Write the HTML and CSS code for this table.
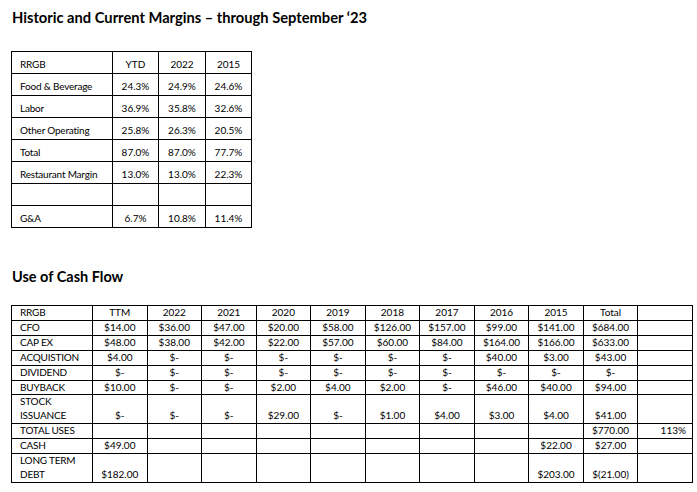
FILE: index.html
```html
<!DOCTYPE html>
<html>
<head>
<meta charset="utf-8">
<link rel="stylesheet" href="styles.css">
</head>
<body>
<h1 class="title">Historic and Current Margins – through September ‘23</h1>
<table class="margins">
  <colgroup><col class="m-label"><col class="m-ytd"><col class="m-y1"><col class="m-y2"></colgroup>
  <tr><td class="lbl">RRGB</td><td>YTD</td><td>2022</td><td>2015</td></tr>
  <tr><td class="lbl">Food &amp; Beverage</td><td>24.3%</td><td>24.9%</td><td>24.6%</td></tr>
  <tr><td class="lbl">Labor</td><td>36.9%</td><td>35.8%</td><td>32.6%</td></tr>
  <tr><td class="lbl">Other Operating</td><td>25.8%</td><td>26.3%</td><td>20.5%</td></tr>
  <tr><td class="lbl">Total</td><td>87.0%</td><td>87.0%</td><td>77.7%</td></tr>
  <tr><td class="lbl">Restaurant Margin</td><td>13.0%</td><td>13.0%</td><td>22.3%</td></tr>
  <tr><td class="lbl"></td><td></td><td></td><td></td></tr>
  <tr><td class="lbl">G&amp;A</td><td>6.7%</td><td>10.8%</td><td>11.4%</td></tr>
</table>

<h2 class="subtitle">Use of Cash Flow</h2>
<table class="cash">
  <colgroup><col class="c-label"><col span="11"></colgroup>
  <tr><td class="lbl">RRGB</td><td>TTM</td><td>2022</td><td>2021</td><td>2020</td><td>2019</td><td>2018</td><td>2017</td><td>2016</td><td>2015</td><td>Total</td><td></td></tr>
  <tr><td class="lbl">CFO</td><td>$14.00</td><td>$36.00</td><td>$47.00</td><td>$20.00</td><td>$58.00</td><td>$126.00</td><td>$157.00</td><td>$99.00</td><td>$141.00</td><td>$684.00</td><td></td></tr>
  <tr><td class="lbl">CAP EX</td><td>$48.00</td><td>$38.00</td><td>$42.00</td><td>$22.00</td><td>$57.00</td><td>$60.00</td><td>$84.00</td><td>$164.00</td><td>$166.00</td><td>$633.00</td><td></td></tr>
  <tr><td class="lbl">ACQUISTION</td><td>$4.00</td><td>$-</td><td>$-</td><td>$-</td><td>$-</td><td>$-</td><td>$-</td><td>$40.00</td><td>$3.00</td><td>$43.00</td><td></td></tr>
  <tr><td class="lbl">DIVIDEND</td><td>$-</td><td>$-</td><td>$-</td><td>$-</td><td>$-</td><td>$-</td><td>$-</td><td>$-</td><td>$-</td><td>$-</td><td></td></tr>
  <tr><td class="lbl">BUYBACK</td><td>$10.00</td><td>$-</td><td>$-</td><td>$2.00</td><td>$4.00</td><td>$2.00</td><td>$-</td><td>$46.00</td><td>$40.00</td><td>$94.00</td><td></td></tr>
  <tr><td class="lbl">STOCK<br>ISSUANCE</td><td>$-</td><td>$-</td><td>$-</td><td>$29.00</td><td>$-</td><td>$1.00</td><td>$4.00</td><td>$3.00</td><td>$4.00</td><td>$41.00</td><td></td></tr>
  <tr><td class="lbl">TOTAL USES</td><td></td><td></td><td></td><td></td><td></td><td></td><td></td><td></td><td></td><td>$770.00</td><td class="pct">113%</td></tr>
  <tr><td class="lbl">CASH</td><td>$49.00</td><td></td><td></td><td></td><td></td><td></td><td></td><td></td><td>$22.00</td><td>$27.00</td><td></td></tr>
  <tr><td class="lbl">LONG TERM<br>DEBT</td><td>$182.00</td><td></td><td></td><td></td><td></td><td></td><td></td><td></td><td>$203.00</td><td>$(21.00)</td><td></td></tr>
</table>
</body>
</html>
```

FILE: styles.css
```css
html, body {
  margin: 0;
  padding: 0;
  background: #ffffff;
}
body {
  font-family: Lato, "Open Sans", "Liberation Sans", sans-serif;
  color: #000000;
}
.title {
  margin: 0;
  padding: 8px 0 0 12px;
  font-size: 14.7px;
  line-height: 19px;
  font-weight: 700;
}
.subtitle {
  margin: 39px 0 0 0;
  padding: 0 0 0 12px;
  font-size: 14.5px;
  line-height: 19px;
  font-weight: 700;
}
table {
  border-collapse: collapse;
  table-layout: fixed;
  font-size: 10px;
}
td {
  border: 1px solid #000;
  padding: 0;
  text-align: center;
  white-space: nowrap;
}
td.lbl {
  text-align: left;
  padding-left: 8px;
  letter-spacing: -0.2px;
}
.margins {
  width: 241px;
  margin: 24px 0 0 11px;
}
.m-label { width: 101px; }
.m-ytd { width: 46px; }
.m-y1 { width: 47px; }
.m-y2 { width: 46px; }
.margins td {
  height: 22px;
  vertical-align: bottom;
  padding-bottom: 3px;
  box-sizing: border-box;
  line-height: 12px;
}
.cash {
  width: 682px;
  margin: 19px 0 0 11px;
}
.c-label { width: 81px; }
.cash td {
  line-height: 13.9px;
  vertical-align: bottom;
}
.cash td.pct {
  text-align: right;
  padding-right: 6px;
}
```
